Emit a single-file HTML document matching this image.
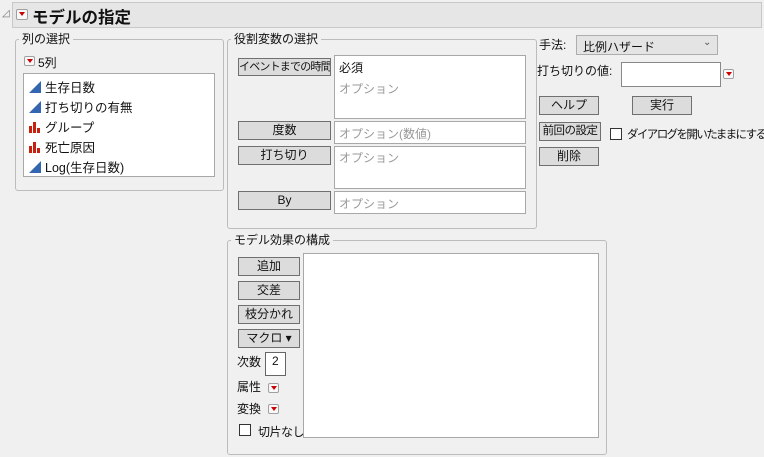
<!DOCTYPE html><html><head><meta charset="utf-8"><style>
body{margin:0;width:764px;height:457px;background:#f0f0f0;font-family:"Liberation Sans","Noto Sans CJK JP",sans-serif;font-size:12px;color:#111;position:relative;overflow:hidden}
.a{position:absolute;white-space:nowrap}
.grp{position:absolute;border:1px solid #bcbcbc;border-radius:3px}
.lbl{position:absolute;background:#f0f0f0;padding:0 3px;font-size:12px;line-height:14px}
.btn{position:absolute;background:#dcdcdc;border:1px solid #707070;text-align:center;font-size:12px;box-sizing:border-box;line-height:16px;white-space:nowrap;overflow:hidden}
.box{position:absolute;background:#fff;border:1px solid #a8a8a8;box-sizing:border-box}
.opt{color:#9a9a9a}
.red{position:absolute;width:11px;height:10px;border:1px solid #a0a0a0;border-radius:2px;background:#f8f8f8;box-sizing:border-box}
.red:after{content:"";position:absolute;left:2px;top:2px;border-left:3px solid transparent;border-right:3px solid transparent;border-top:4px solid #c00}
.chk{position:absolute;width:12px;height:12px;border:1px solid #333;background:#fff;box-sizing:border-box}
.it{position:absolute;left:5px;font-size:12.5px;white-space:nowrap}
.it svg{vertical-align:-1px;margin-right:4px}
</style></head><body>
<div class="a" style="left:2px;top:8px;color:#777;font-size:10px">◿</div>
<div style="position:absolute;left:12px;top:2px;width:748px;height:24px;background:#e6e6e6;border:1px solid #c8c8c8"></div>
<div class="red" style="left:16px;top:9px;width:12px;height:11px"></div>
<div class="a" style="left:32px;top:4px;font-size:16.5px;font-weight:bold">モデルの指定</div>

<div class="grp" style="left:15px;top:39px;width:207px;height:150px"></div>
<div class="lbl" style="left:19px;top:32px">列の選択</div>
<div class="red" style="left:24px;top:56px"></div>
<div class="a" style="left:38px;top:54px">5列</div>
<div class="box" style="left:23px;top:73px;width:192px;height:104px">
<div class="it" style="top:3px"><svg width="12" height="12"><path d="M0 12L12 0V12Z" fill="#3465b0"/></svg>生存日数</div>
<div class="it" style="top:23px"><svg width="12" height="12"><path d="M0 12L12 0V12Z" fill="#3465b0"/></svg>打ち切りの有無</div>
<div class="it" style="top:43px"><svg width="12" height="12"><path d="M0 5h3v7H0zM4 1h3v11H4zM8 7h3v5H8z" fill="#c8200e"/></svg>グループ</div>
<div class="it" style="top:63px"><svg width="12" height="12"><path d="M0 5h3v7H0zM4 1h3v11H4zM8 7h3v5H8z" fill="#c8200e"/></svg>死亡原因</div>
<div class="it" style="top:83px"><svg width="12" height="12"><path d="M0 12L12 0V12Z" fill="#3465b0"/></svg>Log(生存日数)</div>
</div>

<div class="grp" style="left:227px;top:39px;width:308px;height:188px"></div>
<div class="lbl" style="left:231px;top:32px">役割変数の選択</div>
<div class="btn" style="left:238px;top:58px;width:93px;height:18px;font-size:11px;letter-spacing:-0.8px">イベントまでの時間</div>
<div class="btn" style="left:238px;top:121px;width:93px;height:19px">度数</div>
<div class="btn" style="left:238px;top:146px;width:93px;height:19px">打ち切り</div>
<div class="btn" style="left:238px;top:191px;width:93px;height:19px">By</div>
<div class="box" style="left:334px;top:55px;width:192px;height:64px"><div class="a" style="left:4px;top:3px">必須</div><div class="a opt" style="left:4px;top:24px">オプション</div></div>
<div class="box" style="left:334px;top:121px;width:192px;height:23px"><div class="a opt" style="left:4px;top:3px">オプション(数値)</div></div>
<div class="box" style="left:334px;top:146px;width:192px;height:43px"><div class="a opt" style="left:4px;top:2px">オプション</div></div>
<div class="box" style="left:334px;top:191px;width:192px;height:23px"><div class="a opt" style="left:4px;top:3px">オプション</div></div>

<div class="a" style="left:539px;top:36px">手法:</div>
<div style="position:absolute;left:576px;top:35px;width:142px;height:20px;background:#e4e4e4;border:1px solid #adadad;box-sizing:border-box"><span class="a" style="left:6px;top:2px">比例ハザード</span><span class="a" style="left:126px;top:1px;color:#555;font-size:10px">⌄</span></div>
<div class="a" style="left:537px;top:62px">打ち切りの値:</div>
<div class="box" style="left:621px;top:62px;width:100px;height:25px;border-color:#888"></div>
<div class="red" style="left:723px;top:69px"></div>
<div class="btn" style="left:539px;top:96px;width:60px;height:19px">ヘルプ</div>
<div class="btn" style="left:632px;top:96px;width:60px;height:19px">実行</div>
<div class="btn" style="left:539px;top:122px;width:62px;height:19px;font-size:11.5px;letter-spacing:-0.5px">前回の設定</div>
<div class="chk" style="left:610px;top:128px"></div>
<div class="a" style="left:627px;top:126px;font-size:11.5px;letter-spacing:-1.6px">ダイアログを開いたままにする</div>
<div class="btn" style="left:539px;top:147px;width:60px;height:19px">削除</div>

<div class="grp" style="left:227px;top:240px;width:378px;height:213px"></div>
<div class="lbl" style="left:231px;top:233px">モデル効果の構成</div>
<div class="btn" style="left:238px;top:257px;width:62px;height:19px">追加</div>
<div class="btn" style="left:238px;top:281px;width:62px;height:19px">交差</div>
<div class="btn" style="left:238px;top:305px;width:62px;height:19px">枝分かれ</div>
<div class="btn" style="left:238px;top:329px;width:62px;height:19px">マクロ ▾</div>
<div class="a" style="left:237px;top:353px">次数</div>
<div class="box" style="left:265px;top:352px;width:21px;height:24px;border-color:#666"><span class="a" style="left:6px;top:1px">2</span></div>
<div class="a" style="left:237px;top:378px">属性</div><div class="red" style="left:268px;top:383px"></div>
<div class="a" style="left:237px;top:400px">変換</div><div class="red" style="left:268px;top:404px"></div>
<div class="chk" style="left:239px;top:424px"></div>
<div class="a" style="left:258px;top:423px;letter-spacing:-0.5px">切片なし</div>
<div class="box" style="left:303px;top:253px;width:296px;height:185px"></div>
</body></html>
